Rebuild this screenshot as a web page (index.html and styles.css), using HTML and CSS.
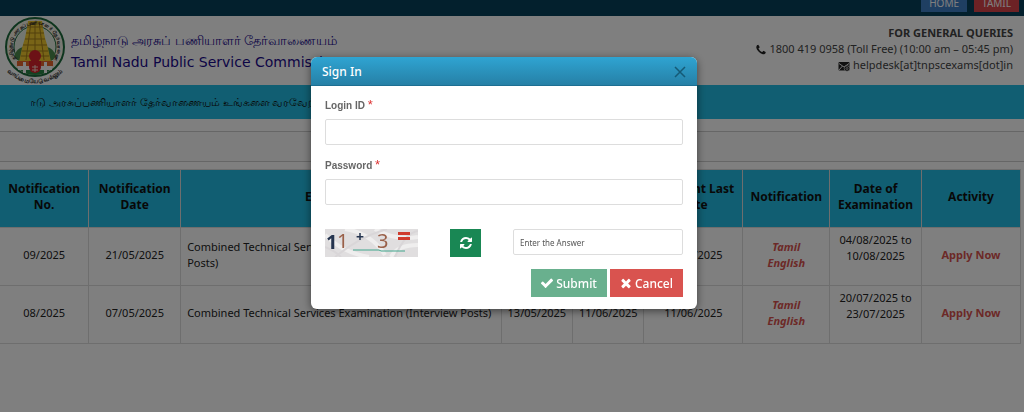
FILE: index.html
```html
<!DOCTYPE html>
<html lang="en">
<head>
<meta charset="utf-8">
<title>Tamil Nadu Public Service Commission</title>
<link rel="stylesheet" href="styles.css">
</head>
<body>
<nav class="topbar">
  <a class="tab tab-home" href="#">HOME</a>
  <a class="tab tab-tamil" href="#">TAMIL</a>
</nav>
<header class="masthead">
  <div class="brand">
    <svg class="emblem" viewBox="0 0 64 68" aria-hidden="true">
      <defs>
        <path id="arc-top" d="M13 42A22.500 22.500 0 1 1 51 42"/>
        <path id="arc-bottom" d="M4 55Q32 78 60 55"/>
      </defs>
      <circle cx="32" cy="30" r="29" fill="#f4f1e4" stroke="#1d6b3c" stroke-width="2"/>
      <circle cx="32" cy="30" r="21" fill="#e6efe2" stroke="#1d6b3c" stroke-width="1"/>
      <path d="M11 39q3-8 9-9l4 13H14zM53 39q-3-8-9-9l-4 13h10z" fill="#4d8a4d"/>
      <path d="M25 4h14l1 7 2 10 3 10 3 14H16l3-14 3-10 2-10z" fill="#f0c92e"/>
      <path d="M24 10h16M23 16h18M22 22h20M20 28h24M19 34h26M18 39h28M28 5l-5 38M32 5v38M36 5l5 38" stroke="#a5801a" stroke-width="1" fill="none"/>
      <path d="M14 44h36v5H14z" fill="#e5662f"/>
      <path d="M15 49h34v4H15z" fill="#fff"/>
      <path d="M17 53h30q-6 5-15 5t-15-5z" fill="#2a8546"/>
      <path d="M20 45h3v11h-3zM41 45h3v11h-3z" fill="#fff"/>
      <circle cx="32" cy="39" r="6" fill="#d8222c"/>
      <circle cx="32" cy="50" r="6" fill="#d8222c"/>
      <path d="M26 44h12v4H26z" fill="#d8222c"/>
      <path d="M29 50h6M29 53h6M32 48v7" stroke="#f4d5c8" stroke-width="1"/>
      <text class="emblem-text"><textPath href="#arc-top">தமிழ்நாடு அரசுப்பணியாளர் தேர்வாணையம்</textPath></text>
      <text class="emblem-text emblem-motto"><textPath href="#arc-bottom" startOffset="50%" text-anchor="middle">வாய்மையே வெல்லும்</textPath></text>
    </svg>
    <div class="brand-names">
      <span class="brand-ta" lang="ta">தமிழ்நாடு அரசுப் பணியாளர் தேர்வாணையம்</span>
      <span class="brand-en">Tamil Nadu Public Service Commission</span>
    </div>
  </div>
  <div class="queries">
    <strong>FOR GENERAL QUERIES</strong>
    <span><svg class="icon-contact" viewBox="0 0 1792 1792" aria-hidden="true"><path d="M1600 1240q0 27-10 70.5t-21 68.5q-21 50-122 106-94 51-186 51-27 0-53-3.5t-57.5-12.5-47-14.5-55.5-20.5-49-18q-98-35-175-83-127-79-264-216t-216-264q-48-77-83-175-3-9-18-49t-20.5-55.5-14.5-47-12.5-57.5-3.5-53q0-92 51-186 56-101 106-122 25-11 68.5-21t70.5-10q14 0 21 3 18 6 53 76 11 19 30 54t35 63.5 31 53.5q3 4 17.5 25t21.5 35.5 7 28.5q0 20-28.5 50t-62 55-62 53-28.5 46q0 9 5 22.5t8.5 20.5 14 24 11.5 19q76 137 174 235t235 174q2 1 19 11.5t24 14 20.5 8.5 22.5 5q18 0 46-28.5t53-62 55-62 50-28.5q14 0 28.5 7t35.5 21.5 25 17.5q25 15 53.5 31t63.5 35 54 30q70 35 76 53 3 7 3 21z"/></svg> 1800 419 0958 (Toll Free) (10:00 am – 05:45 pm)</span>
    <span><svg class="icon-contact" viewBox="0 0 12 12" aria-hidden="true"><rect x="0.5" y="2" width="11" height="8.500" rx="1"/><path d="M1 3.500l5 3.500 5-3.500M1 10l3.500-4" fill="none" stroke="#fff" stroke-width="0.900"/><circle cx="9" cy="8.500" r="2.800" stroke="#fff" stroke-width="0.600"/><circle cx="9" cy="8.500" r="1" fill="none" stroke="#fff" stroke-width="0.600"/></svg> helpdesk[at]tnpscexams[dot]in</span>
  </div>
</header>
<div class="ticker"><p class="ticker-text" lang="ta">நாடு அரசுப்பணியாளர் தேர்வாணையம் உங்களை வரவேற்கிறது</p></div>
<main>
  <div class="strip"></div>
  <table class="notices">
    <colgroup><col class="c-no"><col class="c-date"><col class="c-name"><col class="c-short"><col class="c-short"><col class="c-pay"><col class="c-notif"><col class="c-exam"><col class="c-act"></colgroup>
    <thead>
      <tr><th>Notification No.</th><th>Notification Date</th><th>Exam Name</th><th>Online From</th><th>Online To</th><th>Payment Last Date</th><th>Notification</th><th>Date of Examination</th><th>Activity</th></tr>
    </thead>
    <tbody>
      <tr><td>09/2025</td><td>21/05/2025</td><td class="name">Combined Technical Services Examination (Non-Interview Posts)</td><td>27/05/2025</td><td>25/06/2025</td><td>25/06/2025</td><td><a class="doc" href="#">Tamil</a><a class="doc" href="#">English</a></td><td class="exam-date">04/08/2025 to 10/08/2025</td><td><a class="apply" href="#">Apply Now</a></td></tr>
      <tr><td>08/2025</td><td>07/05/2025</td><td class="name">Combined Technical Services Examination (Interview Posts)</td><td>13/05/2025</td><td>11/06/2025</td><td>11/06/2025</td><td><a class="doc" href="#">Tamil</a><a class="doc" href="#">English</a></td><td class="exam-date">20/07/2025 to 23/07/2025</td><td><a class="apply" href="#">Apply Now</a></td></tr>
    </tbody>
  </table>
</main>
<div class="backdrop">
  <section class="modal" role="dialog" aria-modal="true" aria-labelledby="signin-title">
    <div class="modal-head">
      <h2 id="signin-title">Sign In</h2>
      <button class="close" type="button" aria-label="Close"><svg viewBox="0 0 12 12"><path d="M1 1l10 10M11 1L1 11" fill="none" stroke="#155a76" stroke-width="1.500"/></svg></button>
    </div>
    <form class="modal-body">
      <label for="login">Login ID <span class="req">*</span></label>
      <input class="field" id="login" type="text">
      <label for="password">Password <span class="req">*</span></label>
      <input class="field" id="password" type="password">
      <div class="captcha-row">
        <svg class="captcha" viewBox="0 0 93 28" role="img" aria-label="11 + 3 =">
          <rect width="93" height="28" fill="#e0dedf"/>
          <g fill="none" stroke="#efeeee" stroke-width="4">
            <path d="M0 6q18 18 44 22M20 0q26 4 40 26M50 0q20 12 43 8M66 28q6-12 27-12"/>
          </g>
          <path d="M10 28Q34 8 62 0M70 28Q80 4 93 2M0 18q10 4 16 10" fill="none" stroke="#d9d6d8" stroke-width="2"/>
          <text class="cap-bold" x="1" y="20">1</text>
          <text class="cap-thin" x="12" y="19">1</text>
          <text class="cap-plus" x="31" y="13">+</text>
          <text class="cap-thin" x="52" y="19">3</text>
          <path d="M73 3h12v3H73zM73 8h12v3H73z" fill="#cf3b2d"/>
          <path d="M28 21h26l2 1h24" fill="none" stroke="#40a58c" stroke-width="1"/>
        </svg>
        <button class="refresh" type="button" aria-label="Refresh"><svg viewBox="0 0 1792 1792"><path fill="#fff" d="M1639 1056q0 5-1 7-64 268-268 434.500t-478 166.500q-146 0-282.500-55t-243.500-157l-129 129q-19 19-45 19t-45-19-19-45v-448q0-26 19-45t45-19h448q26 0 45 19t19 45-19 45l-137 137q71 66 161 102t187 36q134 0 250-65t186-179q11-17 53-117 8-23 30-23h192q13 0 22.500 9.500t9.500 22.500zm25-800v448q0 26-19 45t-45 19h-448q-26 0-45-19t-19-45 19-45l138-138q-148-137-349-137-134 0-250 65t-186 179q-11 17-53 117-8 23-30 23h-199q-13 0-22.500-9.500t-9.500-22.500v-7q65-268 270-434.500t480-166.500q146 0 284 55.500t245 156.500l130-129q19-19 45-19t45 19 19 45z"/></svg></button>
        <input class="answer" type="text" placeholder="Enter the Answer" aria-label="Enter the Answer">
      </div>
      <div class="actions">
        <button class="btn btn-submit" type="button"><svg viewBox="0 0 1792 1792" aria-hidden="true"><path d="M1671 566q0 40-28 68l-724 724-136 136q-28 28-68 28t-68-28l-136-136-362-362q-28-28-28-68t28-68l136-136q28-28 68-28t68 28l294 295 656-657q28-28 68-28t68 28l136 136q28 28 28 68z"/></svg>Submit</button>
        <button class="btn btn-cancel" type="button"><svg viewBox="0 0 1792 1792" aria-hidden="true"><path d="M1490 1322q0 40-28 68l-136 136q-28 28-68 28t-68-28l-294-294-294 294q-28 28-68 28t-68-28l-136-136q-28-28-28-68t28-68l294-294-294-294q-28-28-28-68t28-68l136-136q28-28 68-28t68 28l294 294 294-294q28-28 68-28t68 28l136 136q28 28 28 68t-28 68l-294 294 294 294q28 28 28 68z"/></svg>Cancel</button>
      </div>
    </form>
  </section>
</div>
</body>
</html>
```

FILE: styles.css
```css
* { box-sizing: border-box; }
body {
  margin: 0;
  background: #fff;
  color: #222;
  font: 11px/16px "Noto Sans", "Open Sans", sans-serif;
}
a { text-decoration: none; }

.topbar {
  display: flex;
  justify-content: flex-end;
  align-items: flex-end;
  gap: 7px;
  height: 16px;
  padding: 0 5px 4px;
  overflow: hidden;
  background: #06415a;
}
.tab {
  padding: 1px 8px;
  font-size: 10px;
  color: #fff;
}
.tab-home { background: #3f7fc4; }
.tab-tamil { background: #d9454a; }

.masthead {
  display: flex;
  justify-content: space-between;
  align-items: center;
  min-height: 69px;
  padding: 0 11px 0 3px;
}
.brand { display: flex; align-items: center; gap: 4px; }
.emblem { width: 64px; height: 68px; }
.emblem-text { font: bold 5px "Noto Sans", sans-serif; fill: #222; }
.emblem-motto { font-size: 6px; }
.brand-names { display: flex; flex-direction: column; gap: 4px; color: #1a0a8c; white-space: nowrap; }
.brand-ta { font-size: 13px; line-height: 18px; }
.brand-en { font: 14px/18px "DejaVu Sans", sans-serif; }
.queries {
  display: flex;
  flex-direction: column;
  align-items: flex-end;
  padding-bottom: 3px;
  color: #444;
}
.icon-contact { width: 12px; height: 12px; vertical-align: -3px; fill: #222; }

.ticker { padding: 9px 31px; background: #22bde4; }
.ticker-text {
  margin: 0;
  overflow: hidden;
  text-indent: -8px;
  white-space: nowrap;
  color: #111;
}

.strip {
  height: 31px;
  margin: 12px 0 7px;
  border: solid #ccc;
  border-width: 1px 0;
  background: #fafafa;
}
.notices {
  width: calc(100% - 3px);
  table-layout: fixed;
  border-collapse: collapse;
}
.c-no { width: 8.7%; }
.c-date { width: 9%; }
.c-name { width: 31.4%; }
.c-short { width: 7%; }
.c-pay { width: 9.7%; }
.c-notif { width: 8.5%; }
.c-exam { width: 9%; }
.c-act { width: 9.7%; }
.notices th, .notices td {
  height: 58px;
  padding: 4px 6px 7px;
  text-align: center;
  border: 1px solid #ddd;
}
.notices tr > :first-child { border-left: 0; }
.notices th { background: #22bde4; color: #111; font-size: 12px; }
.notices .name { text-align: left; }
.notices .exam-date { vertical-align: top; padding: 4px 8px; }
.doc { display: block; font-weight: bold; font-style: italic; color: #d9534f; }
.apply { font-weight: bold; color: #d9534f; }

.backdrop {
  position: fixed;
  inset: 0;
  display: flex;
  justify-content: center;
  align-items: flex-start;
  padding: 57px 16px 0 0;
  background: rgba(0, 0, 0, 0.5);
}
.modal {
  width: 386px;
  overflow: hidden;
  border-radius: 6px;
  background: #fff;
  box-shadow: 0 2px 8px rgba(0, 0, 0, 0.5);
}
.modal-head {
  display: flex;
  justify-content: space-between;
  align-items: center;
  height: 29px;
  padding: 2px 11px 0;
  border-bottom: 1px solid #1d6f92;
  background: linear-gradient(#2fa4d2, #2680a6);
}
.modal-head h2 { margin: 0; font-size: 12px; font-weight: 500; color: #fff; }
.close { display: flex; padding: 0; border: 0; background: none; }
.close svg { width: 12px; height: 12px; }

.modal-body {
  display: flex;
  flex-direction: column;
  padding: 11px 14px 12px;
  font-family: "Liberation Sans", Arial, sans-serif;
}
.modal-body label { margin-bottom: 5px; font-size: 10px; font-weight: bold; color: #666; }
.req { font-size: 13px; font-weight: normal; color: #d33; }
.field, .answer {
  min-width: 0;
  height: 26px;
  border: 1px solid #ddd;
  border-radius: 2px;
  background: #fff;
}
.field { margin-bottom: 12px; }
.captcha-row { display: flex; align-items: flex-start; margin: 12px 0; }
.captcha { width: 93px; height: 28px; }
.cap-bold { font: bold 20px "Noto Sans", sans-serif; fill: #25344f; }
.cap-thin { font: 20px "Noto Sans", sans-serif; fill: #9a6049; }
.cap-plus { font: bold 14px "Noto Sans", sans-serif; fill: #25344f; }
.refresh {
  display: flex;
  justify-content: center;
  align-items: center;
  width: 31px;
  height: 28px;
  margin: 0 32px;
  padding: 0;
  border: 0;
  background: #198754;
}
.refresh svg { width: 14px; height: 14px; }
.answer { flex: 1; padding: 0 6px; font: 8px "Noto Sans", sans-serif; }
.answer::placeholder { color: #555; opacity: 1; }
.actions { display: flex; justify-content: flex-end; gap: 3px; }
.btn {
  display: flex;
  align-items: center;
  gap: 2px;
  height: 28px;
  padding: 0 10px 0 9px;
  border: 0;
  color: #fff;
  font: 500 12px "Noto Sans", sans-serif;
}
.btn svg { width: 14px; height: 14px; fill: #fff; }
.btn-submit { background: #69b08e; }
.btn-cancel { background: #d9534f; }
```
